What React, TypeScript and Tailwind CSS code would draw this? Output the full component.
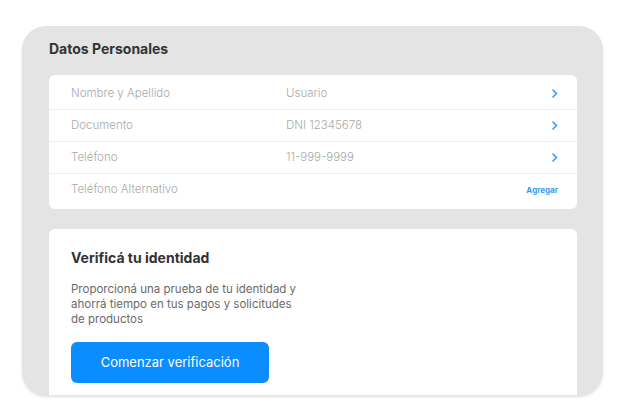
import React from 'react';

interface RowProps {
  label: string;
  value?: string;
  action?: 'chevron' | 'agregar';
  last?: boolean;
}

const Chevron = () => (
  <svg width="6" height="9" viewBox="0 0 6 9" fill="none">
    <path d="M1 1l3.5 3.5L1 8" stroke="#2f9bf2" strokeWidth="1.5" strokeLinecap="round" strokeLinejoin="round" />
  </svg>
);

const Row = ({ label, value, action, last }: RowProps) => {
  return (
    <div className={`flex items-center h-[32px] pl-[22px] pr-[19px] ${last ? '' : 'border-b border-[#efefef]'}`}>
      <span className="w-[215px] text-[11.5px] font-light text-[#a9a9a9]">{label}</span>
      <span className="flex-1 text-[11.5px] font-light text-[#a9a9a9]">{value}</span>
      {action === 'chevron' && <Chevron />}
      {action === 'agregar' && (
        <span className="text-[8px] font-bold text-[#3a9bf0]">Agregar</span>
      )}
    </div>
  );
};

export default function App() {
  return (
    <div className="w-[625px] h-[416px] bg-white pt-[26px] px-[22px] font-['Inter',sans-serif]">
      <div className="h-[369px] rounded-[24px] overflow-hidden bg-[#e4e4e4] pl-[27px] pr-[26px] pt-[13px] shadow-[0_2px_3px_rgba(0,0,0,0.12)]">
        {/* Datos personales */}
        <h2 className="text-[14px] leading-[20px] font-bold text-[#333]">Datos Personales</h2>

        <div className="mt-[16px] bg-white rounded-[6px] pt-[3px] pb-[3px]">
          <Row label="Nombre y Apellido" value="Usuario" action="chevron" />
          <Row label="Documento" value="DNI 12345678" action="chevron" />
          <Row label="Teléfono" value="11-999-9999" action="chevron" />
          <Row label="Teléfono Alternativo" action="agregar" last />
        </div>

        {/* Verificacion */}
        <div className="mt-[20px] bg-white rounded-t-[6px] pl-[22px] pt-[19px] h-[200px]">
          <h3 className="text-[14px] leading-[20px] font-bold text-[#333]">Verificá tu identidad</h3>
          <p className="mt-[14px] w-[230px] text-[11.5px] leading-[15px] text-[#6a6a6a]">
            Proporcioná una prueba de tu identidad y ahorrá tiempo en tus pagos y solicitudes de productos
          </p>
          <button className="mt-[15px] w-[198px] h-[41px] rounded-[6px] bg-[#0b8cff] text-white text-[13px]">
            Comenzar verificación
          </button>
        </div>
      </div>
    </div>
  );
}
